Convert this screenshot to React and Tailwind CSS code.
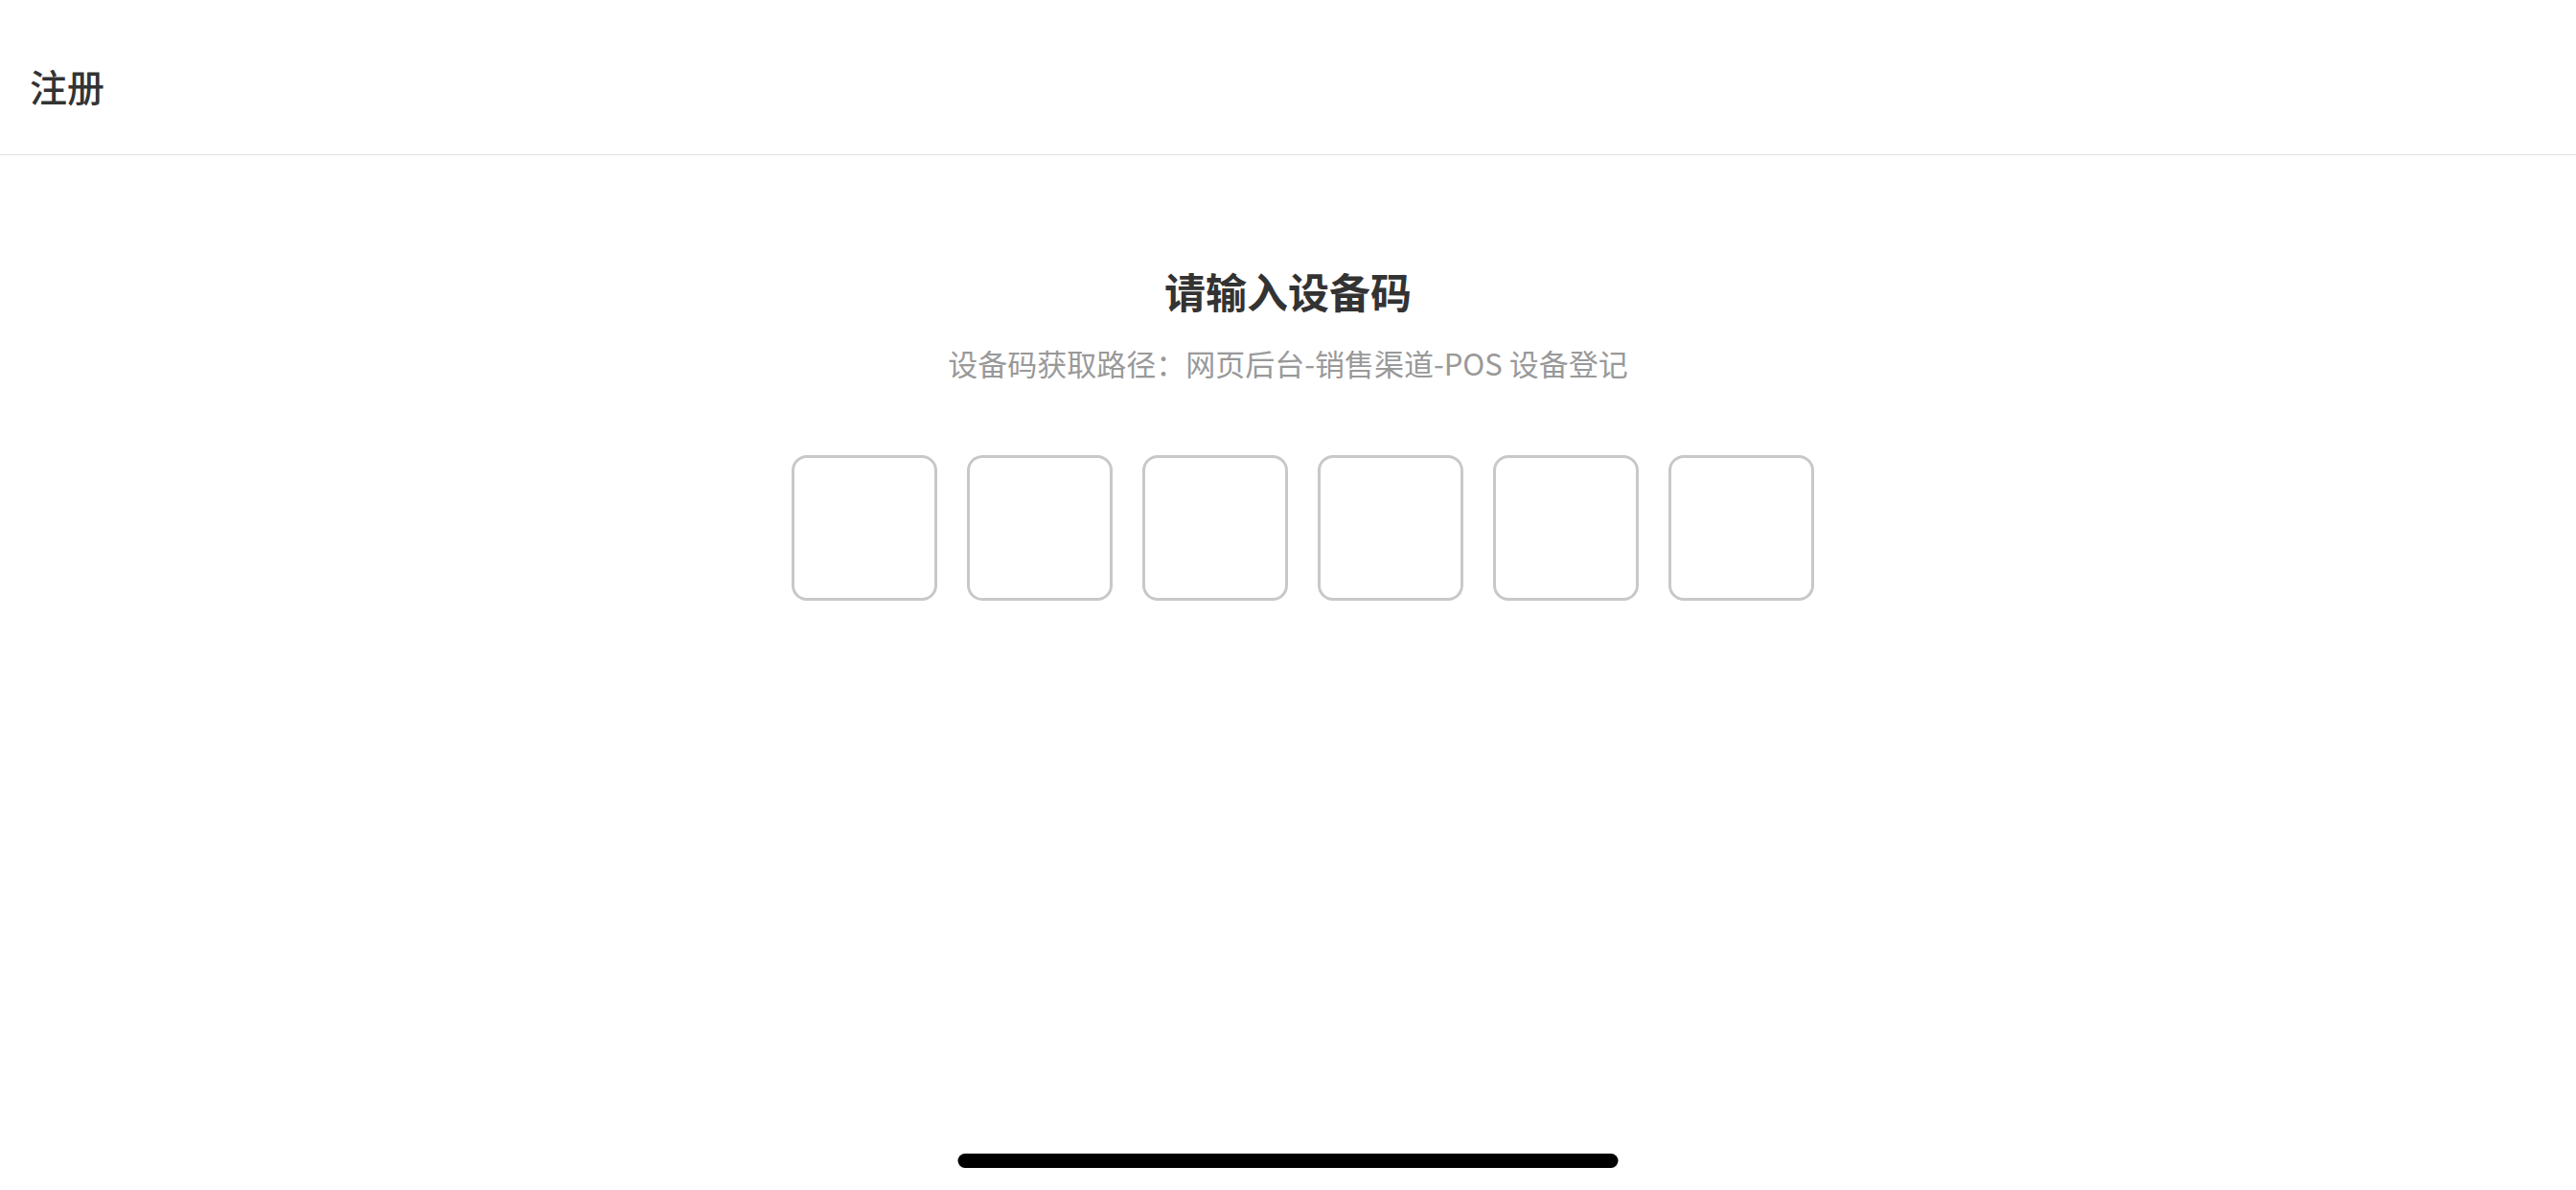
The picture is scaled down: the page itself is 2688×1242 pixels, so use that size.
import React, { useState } from 'react';

const CODE_LENGTH = 6;

export default function App() {
  const [code] = useState(Array(CODE_LENGTH).fill(''));

  return (
    <div
      className="relative h-[1242px] w-full overflow-hidden bg-white text-[#333333]"
      style={{ fontFamily: '"Noto Sans CJK SC", "Noto Sans", sans-serif' }}
    >
      {/* Header */}
      <header className="h-[162px] border-b border-[#e0e0e0] pl-[31px] pt-[69px]">
        <h1 className="text-[39px] font-medium leading-[40px] text-[#333333]">注册</h1>
      </header>

      {/* Body */}
      <main className="flex flex-col items-center pt-[115px]">
        <h2 className="text-[43px] font-bold leading-[52px] text-[#333333]">请输入设备码</h2>
        <p className="mt-[30px] text-[31px] leading-[40px] text-[#999999]">
          设备码获取路径：网页后台-销售渠道-POS 设备登记
        </p>

        <div className="mt-[76px] flex gap-[31px] pl-[30px]">
          {code.map((digit, i) => (
            <div
              key={i}
              className="flex h-[152px] w-[152px] items-center justify-center rounded-[16px] border-[3px] border-[#c8c8c8] text-[60px]"
            >
              {digit}
            </div>
          ))}
        </div>
      </main>

      {/* Home indicator */}
      <div className="absolute bottom-[23px] left-1/2 h-[15px] w-[689px] -translate-x-1/2 rounded-full bg-black" />
    </div>
  );
}
